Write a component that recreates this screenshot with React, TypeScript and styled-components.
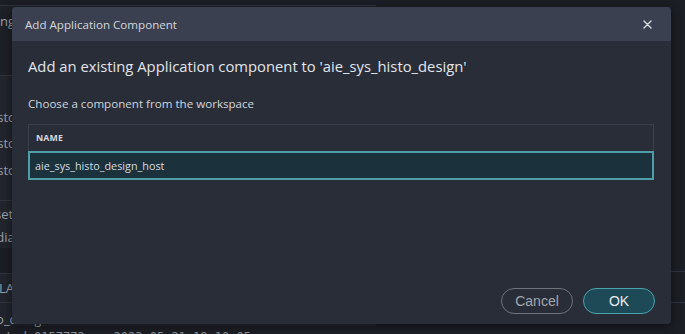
import styled, { createGlobalStyle } from 'styled-components'

const GlobalStyle = createGlobalStyle`
  html, body {
    margin: 0;
    padding: 0;
    background: #1c1e25;
    overflow: hidden;
  }
  * { box-sizing: border-box; }
`;

const Screen = styled.div`
  position: relative;
  width: 685px;
  height: 334px;
  overflow: hidden;
  background: #1c1e25;
  font-family: 'Open Sans', 'Noto Sans', sans-serif;
`;

const Backdrop = styled.div`
  display: flex;
  flex-direction: column;
  width: 100%;
  height: 100%;
`;

const Main = styled.div`
  display: flex;
  height: 326px;
`;

const LeftPane = styled.div`
  display: flex;
  flex-direction: column;
  width: 376px;
  padding-top: 5px;
`;

const RightPane = styled.div`
  flex: 1;
  display: flex;
  flex-direction: column;
  padding-top: 271px;
`;

const BgRow = styled.div<{ $h: number; $bg?: string; $line?: boolean; $pad?: number }>`
  display: flex;
  align-items: center;
  height: ${(p) => p.$h}px;
  padding-top: ${(p) => p.$pad || 0}px;
  background: ${(p) => p.$bg || 'transparent'};
  border-top: ${(p) => (p.$line ? '1px solid #30343e' : 'none')};
  color: #9aa0aa;
  font-size: 13px;
  white-space: nowrap;
`;

const BgText = styled.span<{ $shift: number }>`
  margin-left: ${(p) => -p.$shift}px;
`;

const StatusLine = styled.div`
  height: 8px;
  padding-top: 4px;
  margin-left: -2px;
  font-family: 'DejaVu Sans Mono', monospace;
  font-size: 12px;
  line-height: 14px;
  color: #8a909a;
  white-space: nowrap;
`;

const Dialog = styled.div`
  position: absolute;
  left: 12px;
  top: 7px;
  width: 659px;
  height: 317px;
  display: flex;
  flex-direction: column;
  background: #282d38;
  border-radius: 4px;
  overflow: hidden;
  box-shadow: 0 2px 10px rgba(0, 0, 0, 0.5);
`;

const Header = styled.div`
  display: flex;
  align-items: center;
  justify-content: space-between;
  height: 34px;
  padding: 0 17px 0 13px;
  background: #3a4050;
  color: #d3d7de;
  font-size: 11.6px;
`;

const CloseButton = styled.button`
  display: flex;
  align-items: center;
  justify-content: center;
  width: 14px;
  height: 14px;
  padding: 0;
  border: none;
  background: none;
  cursor: pointer;
`;

const Body = styled.div`
  flex: 1;
  display: flex;
  flex-direction: column;
  padding: 14px 17px 0 16px;
`;

const Heading = styled.h2`
  margin: 0;
  font-size: 14.8px;
  line-height: 22px;
  font-weight: 500;
  color: #e2e5ea;
`;

const Subtitle = styled.p`
  margin: 18px 0 0;
  font-size: 11.6px;
  line-height: 18px;
  color: #d0d4db;
`;

const Table = styled.div`
  margin-top: 11px;
  border: 1px solid #3a404d;
`;

const HeadCell = styled.div`
  display: flex;
  align-items: center;
  height: 26px;
  padding-left: 7px;
  font-size: 8.8px;
  font-weight: 700;
  letter-spacing: 0.2px;
  color: #d6d9df;
`;

const Row = styled.div<{ $selected?: boolean }>`
  display: flex;
  align-items: center;
  height: 29px;
  margin: 0 -1px -1px;
  padding-left: 5px;
  font-size: 10.8px;
  color: #d8dce2;
  background: ${(p) => (p.$selected ? '#1b323d' : 'transparent')};
  border: 2px solid ${(p) => (p.$selected ? '#4e9ea8' : 'transparent')};
`;

const Footer = styled.div`
  display: flex;
  justify-content: flex-end;
  gap: 10px;
  padding: 0 16px 10px;
`;

const Button = styled.button<{ $primary?: boolean }>`
  width: 72px;
  height: 26px;
  border-radius: 13px;
  font-family: 'Liberation Sans', Arial, sans-serif;
  font-size: 14px;
  cursor: pointer;
  color: ${(p) => (p.$primary ? '#e8ecef' : '#a3a7ae')};
  background: ${(p) => (p.$primary ? '#1e4957' : 'transparent')};
  border: 1px solid ${(p) => (p.$primary ? '#4aa4ae' : '#6d727c')};
`;

const App = () => {
  return (
    <Screen>
      <GlobalStyle />
      <Backdrop>
        <Main>
          <LeftPane>
            <BgRow $h={30} $line $bg="#1e2027">
              <BgText $shift={27}>Setting:</BgText>
            </BgRow>
            <BgRow $h={40} $bg="#1e2027" />
            <BgRow $h={29} $bg="#22252d" $line />
            <BgRow $h={26} $bg="#22252d">
              <BgText $shift={14}>histo</BgText>
            </BgRow>
            <BgRow $h={26} $bg="#22252d">
              <BgText $shift={14}>histo</BgText>
            </BgRow>
            <BgRow $h={27} $bg="#22252d">
              <BgText $shift={14}>histo</BgText>
            </BgRow>
            <BgRow $h={17} $bg="#22252d" />
            <BgRow $h={26} $bg="#22252d" $line>
              <BgText $shift={5}>settings</BgText>
            </BgRow>
            <BgRow $h={22} $bg="#22252d">
              <BgText $shift={23}>media/</BgText>
            </BgRow>
            <BgRow $h={25} $bg="#1c1e25" />
            <BgRow $h={29} $bg="#22252d" $line>
              <BgText $shift={1}>LANG</BgText>
            </BgRow>
            <BgRow $h={24} $bg="#22252d" $line $pad={8}>
              <BgText $shift={26}>histo_design</BgText>
            </BgRow>
          </LeftPane>
          <RightPane>
            <BgRow $h={31} $line />
            <BgRow $h={24} $line />
          </RightPane>
        </Main>
        <StatusLine>ated 0157772 on 2023-05-21 18:10:05</StatusLine>
      </Backdrop>

      <Dialog>
        <Header>
          <span>Add Application Component</span>
          <CloseButton aria-label="Close">
            <svg width="9" height="9" viewBox="0 0 9 9">
              <path d="M1 1L8 8M8 1L1 8" stroke="#d8dce3" strokeWidth="1.4" strokeLinecap="round" />
            </svg>
          </CloseButton>
        </Header>
        <Body>
          <Heading>Add an existing Application component to 'aie_sys_histo_design'</Heading>
          <Subtitle>Choose a component from the workspace</Subtitle>
          <Table>
            <HeadCell>NAME</HeadCell>
            <Row $selected>aie_sys_histo_design_host</Row>
          </Table>
        </Body>
        <Footer>
          <Button>Cancel</Button>
          <Button $primary>OK</Button>
        </Footer>
      </Dialog>
    </Screen>
  );
};

export default App;
